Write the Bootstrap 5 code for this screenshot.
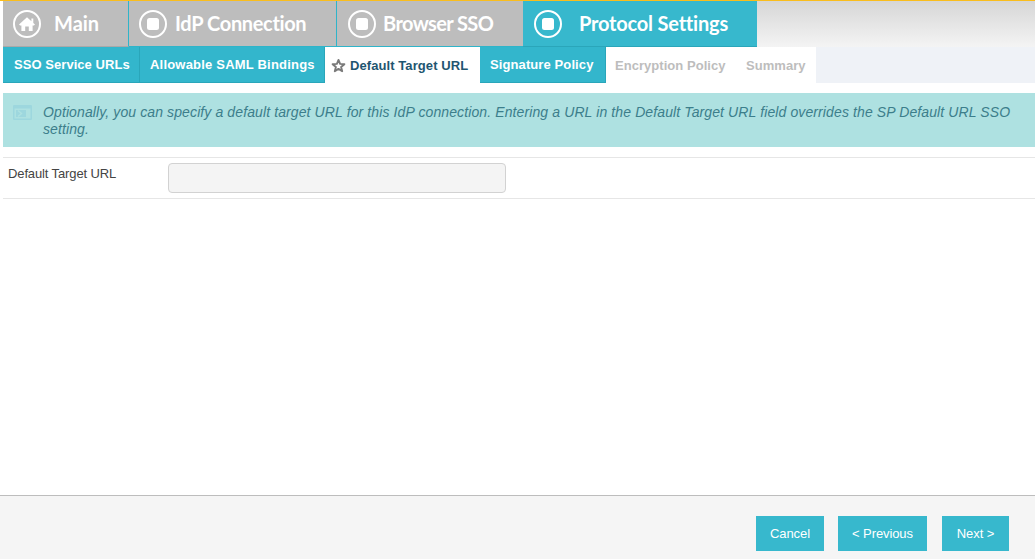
<!DOCTYPE html>
<html lang="en">
<head>
<meta charset="utf-8">
<title>Protocol Settings</title>
<link rel="stylesheet" href="https://cdn.jsdelivr.net/npm/bootstrap@5.3.0/dist/css/bootstrap.min.css">
<style>
html,body{height:559px;overflow:hidden}
body{font-family:"Liberation Sans",Arial,sans-serif;font-size:13px;color:#444;background:#fff}
.shell{height:559px;border-top:1px solid #f9bd1d}
.wrap{margin-left:3px;flex:1 1 auto;min-height:0}
.main-tabs{height:46px;background:linear-gradient(#d6d6d6,#f4f4f4)}
.mtab{background:#bdbdbd;color:#fff;font-family:Lato,sans-serif;font-weight:700;font-size:20px;border-right:1px solid #2fb4c9;border-bottom:1px solid #2fb4c9;white-space:nowrap}
.mtab span{margin-bottom:2px}
.mtab.t1{width:126px;border-bottom-color:#a9a9a9}
.mtab.t2{width:208px;letter-spacing:-.35px}
.mtab.t3{width:186px;border-right:0;letter-spacing:-.6px}
.mtab.t4{width:234px;background:#37b8cd;border-right:0;border-bottom-color:#2aa6ba;letter-spacing:-.2px}
.ring{width:28px;height:28px;flex:none}
.r10{margin-left:10px}.r11{margin-left:11px}
.g7{margin-left:7px}.g8{margin-left:8px}.g13{margin-left:13px}.g17{margin-left:17px}
.sub-tabs{height:36px;background:#eff2f7}
.stab{font-size:13px;font-weight:700;line-height:16px;white-space:nowrap;background:#33b6cc;color:#fff;height:36px;border-right:1px solid #2aa6ba;border-bottom:1px solid #2aa6ba;padding:0}
.s1{width:137px;padding-left:11px;letter-spacing:.05px}
.s2{width:185px;padding-left:10px;letter-spacing:.2px}
.s3{width:155px;padding:1px 0 0 6px;background:#fff;color:#1f5670;border:0;letter-spacing:.08px}
.s3 svg{margin-right:4px;flex:none}
.s4{width:126px;padding-left:10px;letter-spacing:.1px}
.s5{width:130px;padding:2px 0 0 9px;background:#fff;color:#bdbdbd;border:0;letter-spacing:.04px}
.s6{width:80px;padding:2px 0 0 10px;background:#fff;color:#bdbdbd;border:0;letter-spacing:.05px}
.note{margin-top:10px;background:#aee1e1;height:54px;padding:11px 16px 0 10px;font-size:14px;line-height:17px;letter-spacing:.11px;font-style:italic;color:#3c7e8b}
.note svg{flex:none;margin-top:1px;margin-right:11px}
.frow{margin-top:10px;height:42px;border-top:1px solid #e6e6e6;border-bottom:1px solid #e6e6e6;padding:5px 0 0 5px}
.flabel{width:160px;flex:none;font-size:13px;letter-spacing:-.12px;line-height:22px;color:#444}
.finput{width:338px;height:30px;background:#f4f4f4;border:1px solid #d2d2d2;border-radius:4px}
.foot{height:64px;flex:none;background:#f5f5f5;border-top:1px solid #bdbdbd;padding:20px 26px 0 0;gap:14px}
.fbtn{background:#37b8cd;color:#fff;border:0;border-radius:0;font-size:13px;height:35px;padding:0;line-height:35px;letter-spacing:-.1px}
.fbtn:hover{background:#2aa6ba;color:#fff}
.b1{width:68px}.b2{width:89px}.b3{width:67px;margin-left:1px}
</style>
</head>
<body>
<div class="shell d-flex flex-column">
  <div class="wrap">
    <div class="main-tabs d-flex">
      <div class="mtab t1 d-flex align-items-center">
        <svg class="ring r10" viewBox="0 0 28 28"><circle cx="14" cy="14" r="13" fill="none" stroke="#fff" stroke-width="2"/><path d="M14 7.2 18.4 11.2V8.6H20.3V12.9L22 14.6 20.9 15.5H19.6V21H15.8V16.6H12.2V21H8.4V15.5H7.1L6 14.6Z" fill="#fff"/></svg>
        <span class="g13">Main</span>
      </div>
      <div class="mtab t2 d-flex align-items-center">
        <svg class="ring r10" viewBox="0 0 28 28"><circle cx="14" cy="14" r="13" fill="none" stroke="#fff" stroke-width="2"/><rect x="8" y="8" width="12" height="12" rx="2.5" fill="#fff"/></svg>
        <span class="g8">IdP Connection</span>
      </div>
      <div class="mtab t3 d-flex align-items-center">
        <svg class="ring r11" viewBox="0 0 28 28"><circle cx="14" cy="14" r="13" fill="none" stroke="#fff" stroke-width="2"/><rect x="8" y="8" width="12" height="12" rx="2.5" fill="#fff"/></svg>
        <span class="g7">Browser SSO</span>
      </div>
      <div class="mtab t4 d-flex align-items-center">
        <svg class="ring r11" viewBox="0 0 28 28"><circle cx="14" cy="14" r="13" fill="none" stroke="#fff" stroke-width="2"/><rect x="8" y="8" width="12" height="12" rx="2.5" fill="#fff"/></svg>
        <span class="g17">Protocol Settings</span>
      </div>
    </div>
    <div class="sub-tabs d-flex">
      <div class="stab s1 d-flex align-items-center">SSO Service URLs</div>
      <div class="stab s2 d-flex align-items-center">Allowable SAML Bindings</div>
      <div class="stab s3 d-flex align-items-center">
        <svg width="15" height="15" viewBox="0 0 15 15"><path d="M7.5 1.9 9.1 5.9 13.4 6.2 10.1 9 11.2 13.2 7.5 10.9 3.8 13.2 4.9 9 1.6 6.2 5.9 5.9Z" fill="none" stroke="#7a7a7a" stroke-width="1.9" stroke-linejoin="round"/></svg>
        Default Target URL
      </div>
      <div class="stab s4 d-flex align-items-center">Signature Policy</div>
      <div class="stab s5 d-flex align-items-center">Encryption Policy</div>
      <div class="stab s6 d-flex align-items-center">Summary</div>
    </div>
    <div class="note d-flex">
      <svg width="19" height="15" viewBox="0 0 19 15"><rect width="19" height="15" rx="1" fill="#9dd7de"/><rect x="1.5" y="3.5" width="16" height="10" fill="#aee1e1"/><rect x="3" y="5" width="10" height="7" fill="#9dd7de"/><path d="M5 5.5 8.5 8.5 5 11.5" fill="none" stroke="#aee1e1" stroke-width="1.4"/></svg>
      <div>Optionally, you can specify a default target URL for this IdP connection. Entering a URL in the Default Target URL field overrides the SP Default URL SSO setting.</div>
    </div>
    <div class="frow d-flex">
      <div class="flabel">Default Target URL</div>
      <div class="finput"></div>
    </div>
  </div>
  <div class="foot d-flex justify-content-end">
    <button type="button" class="btn fbtn b1">Cancel</button>
    <button type="button" class="btn fbtn b2">&lt; Previous</button>
    <button type="button" class="btn fbtn b3">Next &gt;</button>
  </div>
</div>
<script src="https://cdn.jsdelivr.net/npm/bootstrap@5.3.0/dist/js/bootstrap.bundle.min.js"></script>
</body>
</html>
